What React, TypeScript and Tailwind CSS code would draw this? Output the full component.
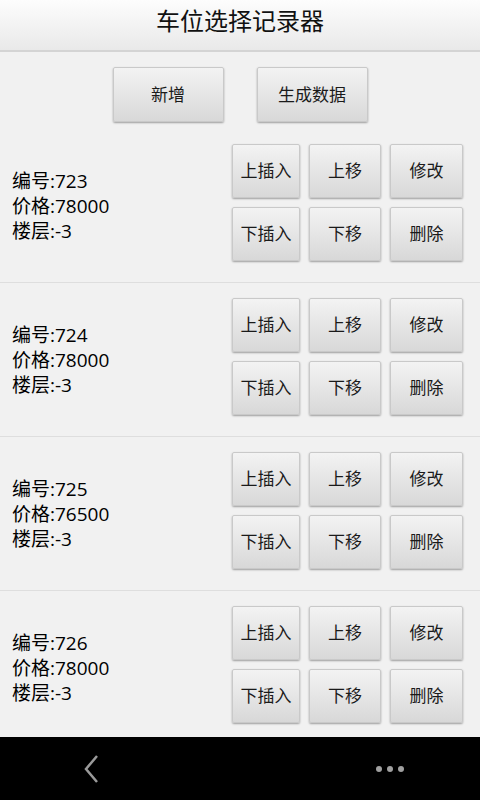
const rows = [
  { no: "723", price: "78000", floor: "-3" },
  { no: "724", price: "78000", floor: "-3" },
  { no: "725", price: "76500", floor: "-3" },
  { no: "726", price: "78000", floor: "-3" },
];

const font = "font-['Open_Sans','Noto_Sans_CJK_SC',sans-serif]";

const Btn = ({ label, className }: { label: string; className: string }) => (
  <button
    className={`${className} flex items-center justify-center rounded-[2px] border border-[#c9c9c9] bg-gradient-to-b from-[#f3f3f3] to-[#d8d8d8] text-[17px] text-[#1a1a1a] shadow-[0_1px_2px_rgba(0,0,0,0.35)]`}
  >
    {label}
  </button>
);

const Row = ({ no, price, floor }: { no: string; price: string; floor: string }) => (
  <div className="flex items-center justify-between border-b border-[#dedede] pl-[12px] pr-[17px] pt-[15px] pb-[21px]">
    <div className="pt-[8px] text-[19px] leading-[25px] text-black">
      <p>编号:{no}</p>
      <p>价格:{price}</p>
      <p>楼层:{floor}</p>
    </div>
    <div className="flex flex-col gap-[9px]">
      <div className="flex gap-[9px]">
        <Btn label="上插入" className="h-[54px] w-[68px]" />
        <Btn label="上移" className="h-[54px] w-[72px]" />
        <Btn label="修改" className="h-[54px] w-[73px]" />
      </div>
      <div className="flex gap-[9px]">
        <Btn label="下插入" className="h-[54px] w-[68px]" />
        <Btn label="下移" className="h-[54px] w-[72px]" />
        <Btn label="删除" className="h-[54px] w-[73px]" />
      </div>
    </div>
  </div>
);

export default function App() {
  return (
    <div className={`${font} flex h-[800px] w-[480px] flex-col bg-[#f1f1f1]`}>
      <header className="flex h-[52px] shrink-0 items-center justify-center border-b-2 border-[#d4d4d4] bg-gradient-to-b from-[#fdfdfd] to-[#e9e9e9] pb-[8px] text-[24px] text-[#111]">
        车位选择记录器
      </header>
      <main className="flex-1 overflow-hidden">
        <div className="flex justify-center gap-[33px] pt-[15px] pb-[7px]">
          <Btn label="新增" className="h-[55px] w-[111px]" />
          <Btn label="生成数据" className="h-[55px] w-[111px]" />
        </div>
        {rows.map((r, idx) => (
          <Row key={idx} {...r} />
        ))}
      </main>
      <nav className="flex h-[63px] shrink-0 items-center justify-between bg-black pl-[82px] pr-[76px]">
        <svg width="18" height="30" viewBox="0 0 18 30">
          <path d="M15 2 L4 15 L15 28" fill="none" stroke="#9a9a9a" strokeWidth="2.5" />
        </svg>
        <div className="flex gap-[5px]">
          <span className="h-[6px] w-[6px] rounded-full bg-[#a0a0a0]" />
          <span className="h-[6px] w-[6px] rounded-full bg-[#a0a0a0]" />
          <span className="h-[6px] w-[6px] rounded-full bg-[#a0a0a0]" />
        </div>
      </nav>
    </div>
  );
}
